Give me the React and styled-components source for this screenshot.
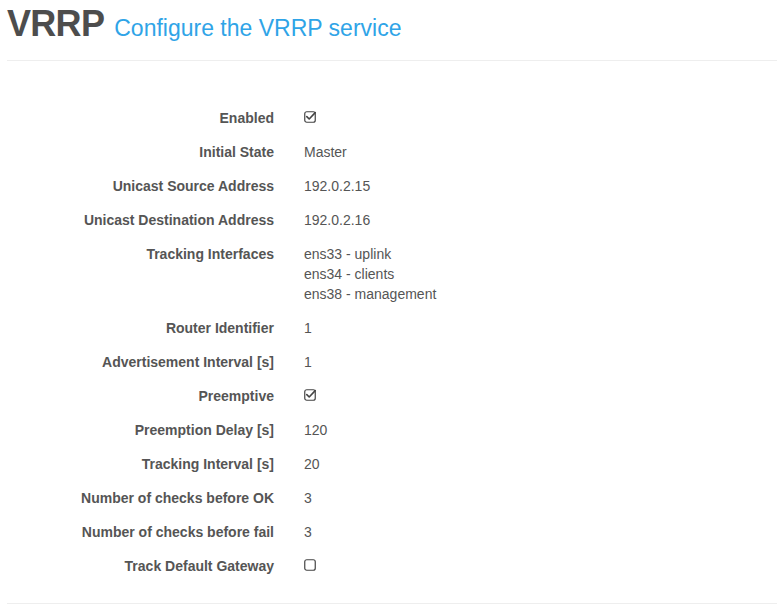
import React from "react";
import styled, { createGlobalStyle } from "styled-components";

const GlobalStyle = createGlobalStyle`
  body {
    margin: 0;
    background: #fff;
    font-family: "Liberation Sans", Arial, sans-serif;
    color: #555;
  }
`;

const Page = styled.div`
  padding: 0 1px 0 7px;
`;

const Header = styled.div`
  padding: 4px 0 16px;
  border-bottom: 1px solid #eee;
  display: flex;
  align-items: baseline;
  gap: 10px;
`;

const Title = styled.h1`
  margin: 0;
  font-size: 36px;
  line-height: 40px;
  font-weight: 700;
  color: #4d4d4d;
  letter-spacing: -0.7px;
`;

const Subtitle = styled.span`
  font-size: 23px;
  color: #2fa4e7;
`;

const Form = styled.div`
  display: grid;
  grid-template-columns: 267px 1fr;
  column-gap: 30px;
  row-gap: 14px;
  padding: 47px 0 27px;
  border-bottom: 1px solid #eee;
`;

const Label = styled.div`
  text-align: right;
  font-weight: 700;
  font-size: 14px;
  line-height: 20px;
  color: #555;
`;

const Value = styled.div`
  font-size: 14px;
  line-height: 20px;
  color: #555;
  display: flex;
  flex-direction: column;
  align-items: flex-start;
`;

const Box = styled.svg`
  width: 12px;
  height: 12px;
  margin-top: 3px;
`;

const Check = ({ checked }) => (
  <Box viewBox="0 0 12 12">
    <rect x="0.75" y="0.75" width="10.5" height="10.5" rx="2" fill="none" stroke="#444" strokeWidth="1.2" />
    {checked && (
      <path d="M2.8 5.6 L5.2 8 L11.2 1.6" fill="none" stroke="#444" strokeWidth="1.6" strokeLinecap="round" strokeLinejoin="round" />
    )}
  </Box>
);

const rows = [
  ["Enabled", <Check checked />],
  ["Initial State", "Master"],
  ["Unicast Source Address", "192.0.2.15"],
  ["Unicast Destination Address", "192.0.2.16"],
  ["Tracking Interfaces", ["ens33 - uplink", "ens34 - clients", "ens38 - management"]],
  ["Router Identifier", "1"],
  ["Advertisement Interval [s]", "1"],
  ["Preemptive", <Check checked />],
  ["Preemption Delay [s]", "120"],
  ["Tracking Interval [s]", "20"],
  ["Number of checks before OK", "3"],
  ["Number of checks before fail", "3"],
  ["Track Default Gateway", <Check checked={false} />],
];

export default function App() {
  return (
    <Page>
      <GlobalStyle />
      <Header>
        <Title>VRRP</Title>
        <Subtitle>Configure the VRRP service</Subtitle>
      </Header>
      <Form>
        {rows.map(([label, value]) => (
          <React.Fragment key={label}>
            <Label>{label}</Label>
            <Value>
              {Array.isArray(value) ? value.map((v) => <span key={v}>{v}</span>) : value}
            </Value>
          </React.Fragment>
        ))}
      </Form>
    </Page>
  );
}
